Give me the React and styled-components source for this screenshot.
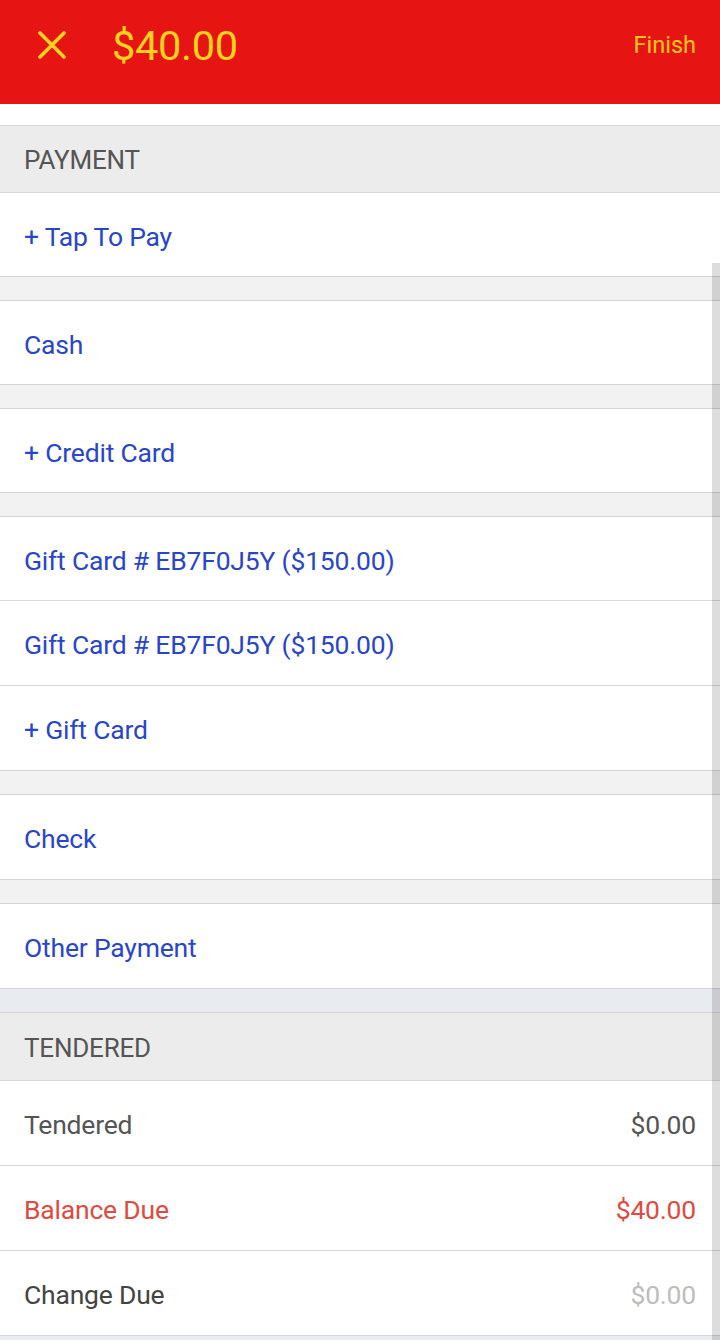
import React from 'react';
import styled, { createGlobalStyle } from 'styled-components';

const GlobalStyle = createGlobalStyle`
  html, body {
    margin: 0;
    padding: 0;
    background: #e9ecf1;
    font-family: Roboto, "Liberation Sans", Arial, sans-serif;
  }
`;

const Screen = styled.div`
  position: relative;
  width: 720px;
  min-height: 1340px;
  background: #e9ecf1;
  overflow: hidden;
`;

const TopBar = styled.header`
  display: flex;
  align-items: center;
  height: 104px;
  padding: 0 24px 14px 36px;
  box-sizing: border-box;
  background: #e71414;
`;

const CloseButton = styled.button`
  display: flex;
  align-items: center;
  justify-content: center;
  width: 32px;
  height: 32px;
  padding: 0;
  border: none;
  background: none;
  cursor: pointer;
`;

const Amount = styled.div`
  margin-left: 44px;
  color: #ffd21c;
  font-size: 41.5px;
  letter-spacing: -0.3px;
`;

const FinishButton = styled.button`
  margin-left: auto;
  padding: 0;
  border: none;
  background: none;
  color: #ffc81e;
  font-family: inherit;
  font-size: 23.5px;
  cursor: pointer;
`;

const Body = styled.div`
  padding-top: 21px;
  background: #ffffff;
`;

const SectionHeader = styled.div`
  display: flex;
  align-items: center;
  height: 68px;
  padding: 2px 24px 0;
  box-sizing: border-box;
  border-top: ${p => (p.noTop ? 'none' : '1px solid #d8d8d8')};
  border-bottom: 1px solid #d8d8d8;
  background: #ececec;
  color: #555555;
  font-size: 26px;
  letter-spacing: -0.2px;
`;

const Group = styled.div`
  background: #ffffff;
  border-bottom: 1px solid #d4d4d4;
`;

const Row = styled.div`
  display: flex;
  align-items: center;
  justify-content: space-between;
  height: ${p => (p.tall ? 84 : 83)}px;
  padding: 3px 24px 0;
  box-sizing: border-box;
  font-size: 26.5px;
  letter-spacing: -0.2px;
  color: ${p => p.color || '#2a46c8'};
  & + & {
    border-top: 1px solid #d9d9d9;
    height: ${p => (p.tall ? 85 : 84)}px;
  }
`;

const Value = styled.span`
  color: ${p => p.color};
`;

const Gap = styled.div`
  height: 23px;
  background: ${p => p.tint || '#f2f2f2'};
  border-bottom: 1px solid #d4d4d4;
`;

const ScrollThumb = styled.div`
  position: absolute;
  top: 263px;
  right: 0;
  width: 8px;
  height: 1077px;
  background: rgba(0, 0, 0, 0.135);
`;

const paymentGroups = [
  ['+ Tap To Pay'],
  ['Cash'],
  ['+ Credit Card'],
  ['Gift Card # EB7F0J5Y ($150.00)', 'Gift Card # EB7F0J5Y ($150.00)', '+ Gift Card'],
  ['Check'],
  ['Other Payment']
];

const tendered = [
  { label: 'Tendered', value: '$0.00', color: '#555555', valueColor: '#555555' },
  { label: 'Balance Due', value: '$40.00', color: '#e04a3f', valueColor: '#e04a3f' },
  { label: 'Change Due', value: '$0.00', color: '#444444', valueColor: '#bdbdbd' }
];

export default function App() {
  return (
    <Screen>
      <GlobalStyle />
      <TopBar>
        <CloseButton aria-label="Close">
          <svg width="28" height="28" viewBox="0 0 28 28">
            <path d="M2 2 L26 26 M26 2 L2 26" stroke="#ffd21c" strokeWidth="3.6" strokeLinecap="round" />
          </svg>
        </CloseButton>
        <Amount>$40.00</Amount>
        <FinishButton>Finish</FinishButton>
      </TopBar>

      <Body>
        <SectionHeader>PAYMENT</SectionHeader>
        {paymentGroups.map((group, i) => (
          <React.Fragment key={i}>
            {i > 0 && <Gap />}
            <Group>
              {group.map((label, j) => (
                <Row key={j} tall={i >= 4}>{label}</Row>
              ))}
            </Group>
          </React.Fragment>
        ))}
        <Gap tint="#e8ebf0" />
        <SectionHeader noTop>TENDERED</SectionHeader>
        <Group>
          {tendered.map(t => (
            <Row key={t.label} tall color={t.color}>
              <span>{t.label}</span>
              <Value color={t.valueColor}>{t.value}</Value>
            </Row>
          ))}
        </Group>
      </Body>
      <ScrollThumb />
    </Screen>
  );
}
